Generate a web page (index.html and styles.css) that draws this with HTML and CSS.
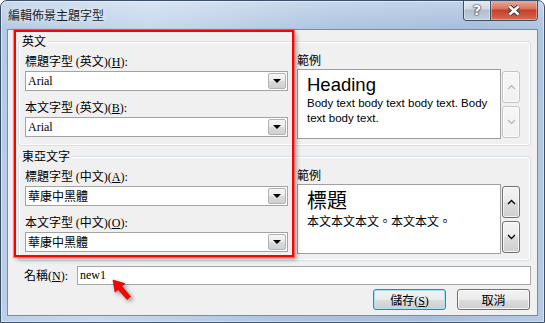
FILE: index.html
```html
<!DOCTYPE html>
<html lang="zh-Hant">
  <head>
    <meta charset="UTF-8" />
    <title>編輯佈景主題字型</title>
    <link rel="stylesheet" href="styles.css">
  </head>
  <body>
    <div class="window">
      <div class="titlebar">
        <div class="title">編輯佈景主題字型</div>
        <div class="caption-buttons">
          <div class="cap-btn help">?</div>
          <div class="cap-btn close">
            <svg width="14" height="11" viewBox="0 0 14 11">
              <path d="M2.5 1.5 L11.5 9.5 M11.5 1.5 L2.5 9.5" stroke="#33383f" stroke-width="4.6" />
              <path d="M2.5 1.5 L11.5 9.5 M11.5 1.5 L2.5 9.5" stroke="#fff" stroke-width="2.6" />
            </svg>
          </div>
        </div>
      </div>

      <div class="client">
        <!-- Latin fonts -->
        <div class="group">
          <div class="legend">英文</div>
          <div class="group-body">
            <div class="font-col">
              <div class="label first">標題字型 <span class="lat">(</span>英文<span class="lat">)(<u>H</u>):</span></div>
              <div class="combo">
                <span class="combo-text lat">Arial</span>
                <span class="drop"><svg width="8" height="4" viewBox="0 0 8 4"><polygon points="0,0 8,0 4,4" fill="#000" /></svg></span>
              </div>
              <div class="label second">本文字型 <span class="lat">(</span>英文<span class="lat">)(<u>B</u>):</span></div>
              <div class="combo">
                <span class="combo-text lat">Arial</span>
                <span class="drop"><svg width="8" height="4" viewBox="0 0 8 4"><polygon points="0,0 8,0 4,4" fill="#000" /></svg></span>
              </div>
            </div>
            <div class="sample-col">
              <div class="label sample-label">範例</div>
              <div class="sample-row">
                <div class="sample">
                  <div class="sample-heading latin">Heading</div>
                  <div class="sample-body latin">Body text body text body text. Body text body text.</div>
                </div>
                <div class="spin">
                  <div class="spin-btn disabled">
                    <svg width="9" height="6" viewBox="0 0 9 6"><polyline points="1,5 4.5,1.5 8,5" fill="none" stroke="#b4b4b4" stroke-width="1.2" /></svg>
                  </div>
                  <div class="spin-btn disabled">
                    <svg width="9" height="6" viewBox="0 0 9 6"><polyline points="1,1 4.5,4.5 8,1" fill="none" stroke="#b4b4b4" stroke-width="1.2" /></svg>
                  </div>
                </div>
              </div>
            </div>
          </div>
        </div>

        <!-- East Asian fonts -->
        <div class="group second-group">
          <div class="legend">東亞文字</div>
          <div class="group-body">
            <div class="font-col">
              <div class="label first">標題字型 <span class="lat">(</span>中文<span class="lat">)(<u>A</u>):</span></div>
              <div class="combo">
                <span class="combo-text">華康中黑體</span>
                <span class="drop"><svg width="8" height="4" viewBox="0 0 8 4"><polygon points="0,0 8,0 4,4" fill="#000" /></svg></span>
              </div>
              <div class="label second">本文字型 <span class="lat">(</span>中文<span class="lat">)(<u>O</u>):</span></div>
              <div class="combo">
                <span class="combo-text">華康中黑體</span>
                <span class="drop"><svg width="8" height="4" viewBox="0 0 8 4"><polygon points="0,0 8,0 4,4" fill="#000" /></svg></span>
              </div>
            </div>
            <div class="sample-col">
              <div class="label sample-label">範例</div>
              <div class="sample-row">
                <div class="sample sample-cjk">
                  <div class="sample-heading cjk">標題</div>
                  <div class="sample-body cjk">本文本文本文。本文本文。</div>
                </div>
                <div class="spin">
                  <div class="spin-btn">
                    <svg width="9" height="6" viewBox="0 0 9 6"><polyline points="1,5 4.5,1.5 8,5" fill="none" stroke="#000" stroke-width="1.3" /></svg>
                  </div>
                  <div class="spin-btn">
                    <svg width="9" height="6" viewBox="0 0 9 6"><polyline points="1,1 4.5,4.5 8,1" fill="none" stroke="#000" stroke-width="1.3" /></svg>
                  </div>
                </div>
              </div>
            </div>
          </div>
        </div>

        <div class="name-row">
          <div class="name-label">名稱<span class="lat">(<u>N</u>):</span></div>
          <div class="name-input lat">new1</div>
        </div>

        <div class="button-row">
          <div class="btn default">儲存<span class="lat">(<u>S</u>)</span></div>
          <div class="btn">取消</div>
        </div>
      </div>

      <!-- annotation drawn over the dialog -->
      <div class="highlight"></div>
      <svg class="arrow" width="40" height="40" viewBox="0 0 40 40">
        <g transform="translate(14,9) rotate(-41.4)">
          <polygon points="0,0 6.5,10.5 2.3,10.5 2.3,24 -2.3,24 -2.3,10.5 -6.5,10.5" fill="#ff0000" stroke="#c00000" stroke-width="0.6" />
        </g>
      </svg>
    </div>
  </body>
</html>
```

FILE: styles.css
```css
* {
  box-sizing: border-box;
}

body {
  margin: 0;
  background: #fff;
  font-family: "Noto Sans CJK TC", sans-serif;
  font-size: 12px;
  color: #000;
}

.lat {
  font-family: "Liberation Serif", "Noto Sans CJK TC", serif;
}

.window {
  position: relative;
  width: 545px;
  height: 323px;
  border: 1px solid #3b4f68;
  border-radius: 7px 7px 0 0;
  overflow: hidden;
  background:
    linear-gradient(to bottom, rgba(255, 255, 255, 0.3), rgba(255, 255, 255, 0) 28px),
    linear-gradient(100deg, #b3c9e4 0%, #c8d9ed 25%, #aec5e1 55%, #a6bedc 80%, #b6cae4 100%);
  box-shadow: inset 0 0 0 1px rgba(255, 255, 255, 0.45);
}

.titlebar {
  display: flex;
  justify-content: space-between;
  align-items: flex-start;
  height: 28px;
}

.title {
  padding: 7px 0 0 7px;
  line-height: 14px;
  color: #1e1e1e;
  text-shadow: 0 0 6px rgba(255, 255, 255, 0.9);
}

.caption-buttons {
  display: flex;
  margin: -1px 6px 0 0;
  height: 21px;
  border: 1px solid #3f4e62;
  border-top: none;
  border-radius: 0 0 4px 4px;
  overflow: hidden;
}

.cap-btn {
  display: flex;
  align-items: center;
  justify-content: center;
  height: 20px;
  box-shadow: inset 0 0 0 1px rgba(255, 255, 255, 0.35);
}

.help {
  width: 27px;
  border-right: 1px solid #3f4e62;
  background: linear-gradient(#e6edf4, #cfd8e2 45%, #b1bdcb 50%, #c3cfdb);
  color: #fff;
  font: bold 14px "DejaVu Sans", sans-serif;
  text-shadow: 0 0 1px #2c333c, 0 0 1px #2c333c, 0 0 2px #2c333c;
}

.close {
  width: 46px;
  background: linear-gradient(#ebb1a4, #d9705b 45%, #c43f27 50%, #d46c51);
}

.client {
  margin: 0 6px;
  height: 287px;
  padding-top: 11px;
  border: 1px solid #7a8ba2;
  background: #f0f0f0;
}

.group {
  height: 105px;
  margin: 0 6px 0 10px;
  border: 1px solid #d5dfe5;
  border-radius: 3px;
  box-shadow: inset 0 0 0 1px #fff;
}

.second-group {
  margin-top: 10px;
}

.legend {
  width: fit-content;
  margin: -8px 0 0 2px;
  padding: 0 1px;
  line-height: 14px;
  background: #f0f0f0;
}

.group-body {
  display: flex;
  padding: 0 10px 0 6px;
}

.label {
  line-height: 14px;
  margin-bottom: 2px;
}

.label.first {
  margin-top: 6px;
}

.label.second {
  margin-top: 9px;
}

.label.sample-label {
  margin-top: 5px;
}

.font-col {
  width: 263px;
}

.combo {
  display: flex;
  height: 20px;
  border: 1px solid #a3a3a3;
  background: #fff;
}

.combo-text {
  flex: 1;
  padding-left: 2px;
  line-height: 18px;
}

.drop {
  display: flex;
  align-items: center;
  justify-content: center;
  width: 18px;
  margin: 1px;
  border: 1px solid #b3b3b3;
  border-radius: 2px;
  background: linear-gradient(#f6f6f6, #eaeaea 50%, #dbdbdb 51%, #d0d0d0);
}

.sample-col {
  margin-left: 9px;
}

.sample-row {
  display: flex;
  gap: 1px;
}

.sample {
  width: 204px;
  height: 70px;
  padding: 4px 0 0 9px;
  border: 1px solid #a0a0a0;
  background: #fff;
}

.sample.sample-cjk {
  padding-top: 0;
}

.sample-heading.latin {
  font-family: "Liberation Sans", Arial, sans-serif;
  font-size: 18.5px;
  line-height: 22px;
}

.sample-body.latin {
  font-family: "Liberation Sans", Arial, sans-serif;
  font-size: 11.5px;
  line-height: 15px;
}

.sample-heading.cjk {
  font-size: 20px;
  line-height: 29px;
}

.sample-body.cjk {
  font-size: 12px;
  line-height: 14px;
}

.spin {
  display: flex;
  flex-direction: column;
  gap: 3px;
  margin-top: 2px;
}

.spin-btn {
  display: flex;
  align-items: center;
  justify-content: center;
  width: 18px;
  height: 32px;
  border: 1px solid #707070;
  border-radius: 3px;
  background: linear-gradient(#f3f3f3, #ebebeb 50%, #dddddd 51%, #cfcfcf);
  box-shadow: inset 0 0 0 1px rgba(255, 255, 255, 0.7);
}

.spin-btn.disabled {
  border-color: #c5c5c5;
  background: linear-gradient(#f6f6f6, #f1f1f1);
}

.name-row {
  display: flex;
  align-items: center;
  margin: 5px 6px 0 0;
  padding-left: 16px;
}

.name-label {
  width: 53px;
  line-height: 14px;
}

.name-input {
  flex: 1;
  height: 19px;
  padding-left: 2px;
  border: 1px solid #a6a6a6;
  background: #fff;
  line-height: 17px;
}

.button-row {
  display: flex;
  justify-content: flex-end;
  gap: 11px;
  margin: 4px 7px 0 0;
}

.btn {
  width: 73px;
  height: 21px;
  border: 1px solid #707070;
  border-radius: 3px;
  background: linear-gradient(#f2f2f2, #ebebeb 50%, #dddddd 51%, #cfcfcf);
  box-shadow: inset 0 0 0 1px rgba(255, 255, 255, 0.75);
  text-align: center;
  line-height: 19px;
}

.btn.default {
  border-color: #3c7fb1;
  box-shadow: inset 0 0 0 1px #a8e3f7;
}

.highlight {
  position: absolute;
  left: 13px;
  top: 29px;
  width: 280px;
  height: 227px;
  border: 2px solid #ff0000;
  box-shadow: 0 0 1px 1px rgba(255, 60, 60, 0.55), 3px 3px 4px rgba(0, 0, 0, 0.3);
}

.arrow {
  position: absolute;
  left: 98px;
  top: 270px;
  filter: drop-shadow(2px 2px 2px rgba(0, 0, 0, 0.45));
}
```
